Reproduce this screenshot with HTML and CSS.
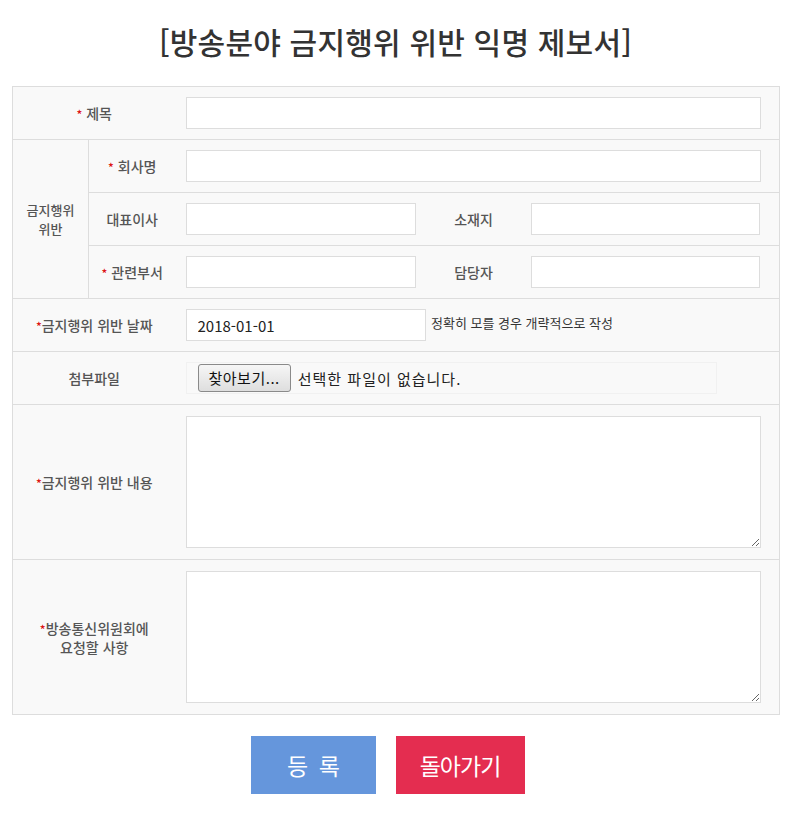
FILE: index.html
```html
<!DOCTYPE html>
<html lang="ko">
<head>
    <meta charset="UTF-8">
    <meta name="viewport" content="width=device-width, initial-scale=1.0">
    <title>방송분야 금지행위 위반 익명 제보서</title>
    <link rel="stylesheet" href="styles.css">
</head>
<body>
    <div id="container">
        <h1>[방송분야 금지행위 위반 익명 제보서]</h1>
        <form action="/report" method="post" enctype="multipart/form-data">
            <table class="report-table">
                <colgroup>
                    <col class="col-group">
                    <col class="col-sub">
                    <col class="col-input">
                    <col class="col-label">
                    <col class="col-input2">
                </colgroup>
                <tr>
                    <th colspan="2"><span class="req">*</span> 제목</th>
                    <td colspan="3" class="wide"><input type="text" name="title" class="text-input"></td>
                </tr>
                <tr>
                    <th rowspan="3" class="group-label">금지행위<br>위반</th>
                    <th><span class="req">*</span> 회사명</th>
                    <td colspan="3" class="wide"><input type="text" name="company" class="text-input"></td>
                </tr>
                <tr>
                    <th>대표이사</th>
                    <td class="left"><input type="text" name="ceo" class="text-input"></td>
                    <th>소재지</th>
                    <td class="right"><input type="text" name="address" class="text-input"></td>
                </tr>
                <tr>
                    <th><span class="req">*</span> 관련부서</th>
                    <td class="left"><input type="text" name="dept" class="text-input"></td>
                    <th>담당자</th>
                    <td class="right"><input type="text" name="manager" class="text-input"></td>
                </tr>
                <tr>
                    <th colspan="2"><span class="req">*</span>금지행위 위반 날짜</th>
                    <td colspan="3" class="wide">
                        <input type="text" name="date" class="text-input date-input" value="2018-01-01">
                        <span class="hint">정확히 모를 경우 개략적으로 작성</span>
                    </td>
                </tr>
                <tr>
                    <th colspan="2">첨부파일</th>
                    <td colspan="3" class="wide">
                        <label class="file-box">
                            <span class="file-btn">찾아보기...</span>
                            <span class="file-name">선택한 파일이 없습니다.</span>
                        </label>
                    </td>
                </tr>
                <tr class="tall">
                    <th colspan="2"><span class="req">*</span>금지행위 위반 내용</th>
                    <td colspan="3" class="wide"><textarea name="content"></textarea></td>
                </tr>
                <tr class="tall">
                    <th colspan="2"><span class="req">*</span>방송통신위원회에<br>요청할 사항</th>
                    <td colspan="3" class="wide"><textarea name="request"></textarea></td>
                </tr>
            </table>

            <div class="buttons">
                <button type="submit" class="btn btn-submit">등 록</button>
                <button type="button" class="btn btn-back">돌아가기</button>
            </div>
        </form>
    </div>
</body>
</html>
```

FILE: styles.css
```css
body {
    font-family: "Noto Sans CJK KR", "Noto Sans", sans-serif;
    background-color: #ffffff;
    margin: 0;
    padding: 0;
    color: #555555;
}

#container {
    width: 767px;
    margin: 0 0 0 12px;
}

#container h1 {
    margin: 21px 0 25px;
    font-size: 30px;
    line-height: 40px;
    font-weight: 500;
    letter-spacing: 0.2px;
    color: #333333;
    text-align: center;
}

.report-table {
    width: 767px;
    table-layout: fixed;
    border-collapse: collapse;
    background-color: #f9f9f9;
    border: 1px solid #dddddd;
}

.col-group { width: 76px; }
.col-sub { width: 87px; }
.col-input { width: 252px; }
.col-label { width: 92px; }
.col-input2 { width: 260px; }

.report-table tr {
    border-bottom: 1px solid #dddddd;
}

.report-table th {
    font-size: 14px;
    font-weight: 500;
    color: #555555;
    text-align: center;
    line-height: 18px;
    padding: 0;
}

.report-table .group-label {
    border-right: 1px solid #dddddd;
    font-size: 13px;
    line-height: 19px;
}

.report-table td {
    height: 32px;
    padding: 10px 0;
}

.report-table td.wide {
    padding-left: 10px;
    padding-right: 18px;
}

.report-table td.left {
    padding-left: 10px;
    padding-right: 12px;
}

.report-table td.right {
    padding-left: 11px;
    padding-right: 19px;
}

.req {
    color: #dd1111;
    font-size: 12px;
}

.text-input {
    display: block;
    width: 100%;
    height: 32px;
    box-sizing: border-box;
    border: 1px solid #dddddd;
    background-color: #ffffff;
    padding: 0 11px;
    font-family: inherit;
    font-size: 15px;
    color: #222222;
}

.date-input {
    display: inline-block;
    width: 240px;
    vertical-align: middle;
}

.hint {
    font-size: 13px;
    color: #333333;
    vertical-align: middle;
    margin-left: 1px;
    position: relative;
    top: -3px;
}

.file-box {
    display: flex;
    align-items: center;
    width: 531px;
    height: 32px;
    box-sizing: border-box;
    border: 1px solid #f1f1f1;
    padding-left: 11px;
    cursor: pointer;
}

.file-btn {
    display: inline-block;
    height: 28px;
    line-height: 26px;
    box-sizing: border-box;
    padding: 0 10px;
    border: 1px solid #8a8a8a;
    border-radius: 3px;
    background: linear-gradient(#f6f6f6, #dedede);
    font-size: 15px;
    letter-spacing: 0.5px;
    color: #111111;
}

.file-name {
    margin-left: 7px;
    font-size: 15px;
    letter-spacing: 1px;
    color: #222222;
}

.report-table tr.tall td {
    height: 132px;
    padding-top: 11px;
    padding-bottom: 11px;
}

.report-table textarea {
    display: block;
    width: 100%;
    height: 132px;
    box-sizing: border-box;
    border: 1px solid #dddddd;
    background-color: #ffffff;
    resize: vertical;
    font-family: inherit;
}

.buttons {
    display: flex;
    justify-content: center;
    gap: 20px;
    margin-top: 21px;
    padding-right: 16px;
}

.btn {
    height: 58px;
    border: none;
    color: #ffffff;
    font-family: inherit;
    font-size: 23px;
    letter-spacing: -1px;
    cursor: pointer;
}

.btn-submit {
    width: 125px;
    background-color: #6596dc;
    word-spacing: 6px;
}

.btn-back {
    width: 129px;
    background-color: #e42d50;
}
```
